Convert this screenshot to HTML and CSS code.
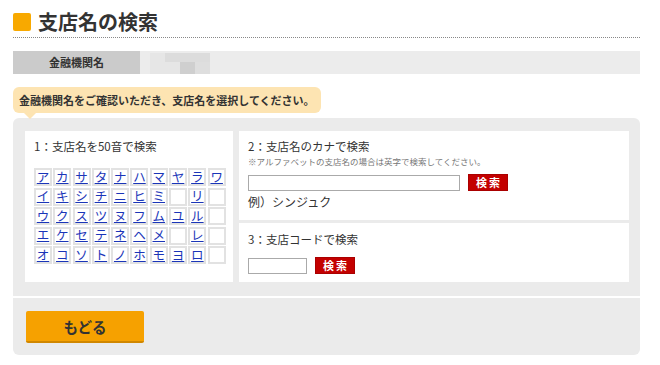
FILE: index.html
```html
<!DOCTYPE html>
<html lang="ja">
<head>
<meta charset="utf-8">
<link rel="stylesheet" href="styles.css">
</head>
<body>
<div class="page">
  <h1 class="title"><span class="title-mark"></span>支店名の検索</h1>

  <div class="bank-row">
    <div class="bank-label">金融機関名</div>
    <div class="bank-value">
      <span class="px p1"></span><span class="px p2"></span><span class="px p3"></span><span class="px p4"></span>
    </div>
  </div>

  <div class="balloon">金融機関名をご確認いただき、支店名を選択してください。</div>

  <div class="panel">
    <div class="panel-top">
      <div class="box box-kana">
        <div class="box-title">1：支店名を50音で検索</div>
        <div class="kana-grid">
          <a class="k">ア</a><a class="k">カ</a><a class="k">サ</a><a class="k">タ</a><a class="k">ナ</a><a class="k">ハ</a><a class="k">マ</a><a class="k">ヤ</a><a class="k">ラ</a><a class="k">ワ</a>
          <a class="k">イ</a><a class="k">キ</a><a class="k">シ</a><a class="k">チ</a><a class="k">ニ</a><a class="k">ヒ</a><a class="k">ミ</a><span class="k"></span><a class="k">リ</a><span class="k"></span>
          <a class="k">ウ</a><a class="k">ク</a><a class="k">ス</a><a class="k">ツ</a><a class="k">ヌ</a><a class="k">フ</a><a class="k">ム</a><a class="k">ユ</a><a class="k">ル</a><span class="k"></span>
          <a class="k">エ</a><a class="k">ケ</a><a class="k">セ</a><a class="k">テ</a><a class="k">ネ</a><a class="k">ヘ</a><a class="k">メ</a><span class="k"></span><a class="k">レ</a><span class="k"></span>
          <a class="k">オ</a><a class="k">コ</a><a class="k">ソ</a><a class="k">ト</a><a class="k">ノ</a><a class="k">ホ</a><a class="k">モ</a><a class="k">ヨ</a><a class="k">ロ</a><span class="k"></span>
        </div>
      </div>
      <div class="right-col">
        <div class="box box-name">
          <div class="box-title">2：支店名のカナで検索</div>
          <div class="note">※アルファベットの支店名の場合は英字で検索してください。</div>
          <div class="field-row">
            <span class="input input-long"></span>
            <span class="btn-search">検索</span>
          </div>
          <div class="example">例）シンジュク</div>
        </div>
        <div class="box box-code">
          <div class="box-title">3：支店コードで検索</div>
          <div class="field-row field-row-code">
            <span class="input input-short"></span>
            <span class="btn-search">検索</span>
          </div>
        </div>
      </div>
    </div>
    <div class="panel-bottom">
      <span class="btn-back">もどる</span>
    </div>
  </div>
</div>
</body>
</html>
```

FILE: styles.css
```css
* { box-sizing: border-box; }
html, body { margin: 0; padding: 0; background: #fff; }
body {
  font-family: "Noto Sans CJK JP", "Noto Sans", sans-serif;
  color: #333;
  width: 660px;
  height: 365px;
  overflow: hidden;
}
.page { padding: 0 20px 0 13px; }

.title {
  margin: 0;
  padding-top: 7px;
  height: 38px;
  display: flex;
  align-items: center;
  gap: 7px;
  font-size: 20px;
  font-weight: bold;
  line-height: 26px;
  color: #333;
  border-bottom: 1px dotted #888;
}
.title-mark {
  width: 18px;
  height: 18px;
  background: #f8a900;
  border-radius: 2px;
  flex: none;
}

.bank-row {
  margin-top: 13px;
  display: flex;
  height: 23px;
}
.bank-label {
  width: 127px;
  background: #cbcbcb;
  font-size: 11px;
  font-weight: bold;
  line-height: 23px;
  text-align: center;
}
.bank-value {
  flex: 1;
  background: #ececec;
  position: relative;
}
.px { position: absolute; display: block; }
.p1 { left: 10px; top: 2px; width: 60px; height: 21px; background: #e6e6e6; }
.p2 { left: 25px; top: 2px; width: 45px; height: 9px; background: #dcdcdc; }
.p3 { left: 40px; top: 11px; width: 15px; height: 12px; background: #cfcfcf; }
.p4 { left: 55px; top: 11px; width: 15px; height: 12px; background: #dedede; }

.balloon {
  position: relative;
  display: inline-block;
  margin-top: 13px;
  height: 26px;
  padding: 0 6px 0 6px;
  background: #fde4b2;
  border-radius: 6px;
  font-size: 11px;
  font-weight: bold;
  line-height: 26px;
  color: #333;
  z-index: 1;
}
.balloon::after {
  content: "";
  position: absolute;
  left: 11px;
  bottom: -6px;
  border-left: 6px solid transparent;
  border-right: 6px solid transparent;
  border-top: 6px solid #fde4b2;
}

.panel {
  margin-top: 5px;
  background: #ebebeb;
  border-radius: 6px;
}
.panel-top {
  display: flex;
  gap: 6px;
  padding: 13px 11px 14px 12px;
  border-bottom: 2px solid #fff;
}
.box { background: #fff; }
.box-kana {
  width: 208px;
  height: 151px;
  padding: 6px 0 0 9px;
}
.box-title {
  font-size: 11.5px;
  line-height: 18px;
  color: #333;
}
.kana-grid {
  margin-top: 13px;
  display: grid;
  grid-template-columns: repeat(10, 18px);
  grid-auto-rows: 18px;
  column-gap: 1.3px;
  row-gap: 1.5px;
}
.k {
  display: flex;
  align-items: center;
  justify-content: center;
  border: 2px solid #e2e2e2;
  font-size: 12.5px;
  line-height: 1;
  color: #1a35b8;
  text-decoration: underline;
  text-underline-offset: 1px;
}

.right-col {
  flex: 1;
  display: flex;
  flex-direction: column;
  gap: 3px;
}
.box-name {
  height: 89px;
  padding: 6px 9px 0;
}
.note {
  font-size: 8.5px;
  line-height: 12px;
  color: #777;
}
.field-row {
  margin-top: 7px;
  display: flex;
  align-items: center;
  gap: 8px;
}
.input {
  display: block;
  height: 16px;
  border: 1px solid #aaa;
  background: #fff;
}
.input-long { width: 212px; }
.input-short { width: 59px; }
.btn-search {
  display: block;
  width: 40px;
  height: 17px;
  background: #c30000;
  border: 1px solid #a00;
  color: #fff;
  font-size: 11px;
  font-weight: bold;
  line-height: 15px;
  text-align: center;
  letter-spacing: 2px;
  padding-left: 2px;
}
.example {
  margin-top: 2px;
  font-size: 12px;
  line-height: 18px;
  color: #333;
}
.box-code {
  flex: 1;
  padding: 7px 9px 0;
}
.field-row-code { margin-top: 9px; }

.panel-bottom {
  padding: 13px 12px 12px 13px;
}
.btn-back {
  display: block;
  width: 118px;
  height: 32px;
  background: #f6a100;
  border-bottom: 2px solid #d08700;
  border-radius: 2px;
  font-size: 14.5px;
  font-weight: bold;
  line-height: 31px;
  text-align: center;
  color: #333;
}
```
